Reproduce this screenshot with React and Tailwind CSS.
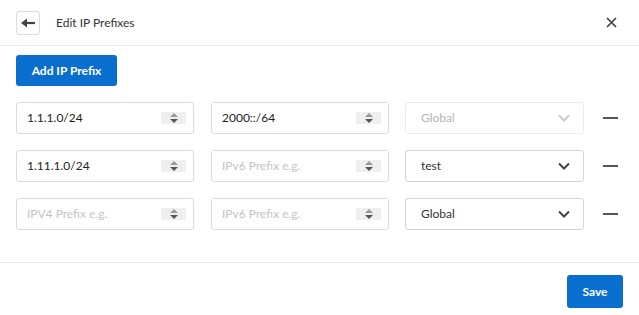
import React from 'react';

const font = { fontFamily: 'Lato, "Open Sans", sans-serif' };

const Spinner = () => (
  <div className="w-[25px] h-[12px] bg-[#efefef] flex items-center justify-center">
    <svg width="8" height="10" viewBox="0 0 8 10">
      <path d="M4 0 L8 4 L0 4 Z" fill="#9a9a9a" />
      <path d="M0 6 L8 6 L4 10 Z" fill="#555" />
    </svg>
  </div>
);

const Chevron = ({ light }) => (
  <svg width="12" height="8" viewBox="0 0 12 8">
    <path d="M1 1.5 L6 6.5 L11 1.5" fill="none" stroke={light ? '#c8c8c8' : '#444'} strokeWidth="2" />
  </svg>
);

const PrefixInput = ({ value, placeholder }) => (
  <div className="w-[178px] h-[32px] border border-[#dcdcdc] rounded-[3px] flex items-center pl-[10px] pr-[7px]">
    <span className={`flex-1 text-[12px] ${value ? 'text-[#222]' : 'text-[#c4c4c4]'}`}>
      {value || placeholder}
    </span>
    <Spinner />
  </div>
);

const ScopeSelect = ({ value, disabled }) => (
  <div
    className={`w-[179px] h-[32px] border rounded-[3px] flex items-center pl-[15px] pr-[13px] ${
      disabled ? 'border-[#ececec]' : 'border-[#d4d4d4]'
    }`}
  >
    <span className={`flex-1 text-[12px] ${disabled ? 'text-[#b5b5b5]' : 'text-[#333]'}`}>{value}</span>
    <Chevron light={disabled} />
  </div>
);

const rows = [
  { v4: '1.1.1.0/24', v6: '2000::/64', scope: 'Global', disabled: true },
  { v4: '1.11.1.0/24', v6: '', scope: 'test' },
  { v4: '', v6: '', scope: 'Global' },
];

export default function App() {
  return (
    <div className="w-[639px] h-[315px] bg-white flex flex-col" style={font}>
      {/* Header */}
      <div className="h-[46px] border-b border-[#e8e8e8] flex items-center px-4 shrink-0">
        <button className="w-[24px] h-[24px] border border-[#dcdcdc] rounded-[3px] flex items-center justify-center">
          <svg width="14" height="10" viewBox="0 0 14 10">
            <path d="M14 5 H4" stroke="#444" strokeWidth="2.2" />
            <path d="M0 5 L6 0.5 L6 9.5 Z" fill="#444" />
          </svg>
        </button>
        <span className="ml-[16px] text-[12px] text-[#333]">Edit IP Prefixes</span>
        <button className="ml-auto mr-[6px]">
          <svg width="11" height="11" viewBox="0 0 11 11">
            <path d="M1 1 L10 10 M10 1 L1 10" stroke="#444" strokeWidth="1.7" />
          </svg>
        </button>
      </div>

      {/* Body */}
      <div className="flex-1 px-4 pt-[9px]">
        <button className="h-[31px] w-[101px] bg-[#0a6ecf] rounded-[3px] text-white text-[12px] font-bold">
          Add IP Prefix
        </button>
        <div className="mt-[16px] flex flex-col gap-[16px]">
          {rows.map((r, i) => (
            <div key={i} className="flex items-center">
              <PrefixInput value={r.v4} placeholder="IPV4 Prefix e.g." />
              <div className="ml-[17px]">
                <PrefixInput value={r.v6} placeholder="IPv6 Prefix e.g." />
              </div>
              <div className="ml-[16px]">
                <ScopeSelect value={r.scope} disabled={r.disabled} />
              </div>
              <div className="ml-[19px] w-[15px] h-[2px] bg-[#555]" />
            </div>
          ))}
        </div>
      </div>

      {/* Footer */}
      <div className="h-[53px] border-t border-[#e8e8e8] flex items-start justify-end px-4 pt-[12px] shrink-0">
        <button className="h-[33px] w-[56px] bg-[#0a6ecf] rounded-[3px] text-white text-[12px] font-bold">
          Save
        </button>
      </div>
    </div>
  );
}
